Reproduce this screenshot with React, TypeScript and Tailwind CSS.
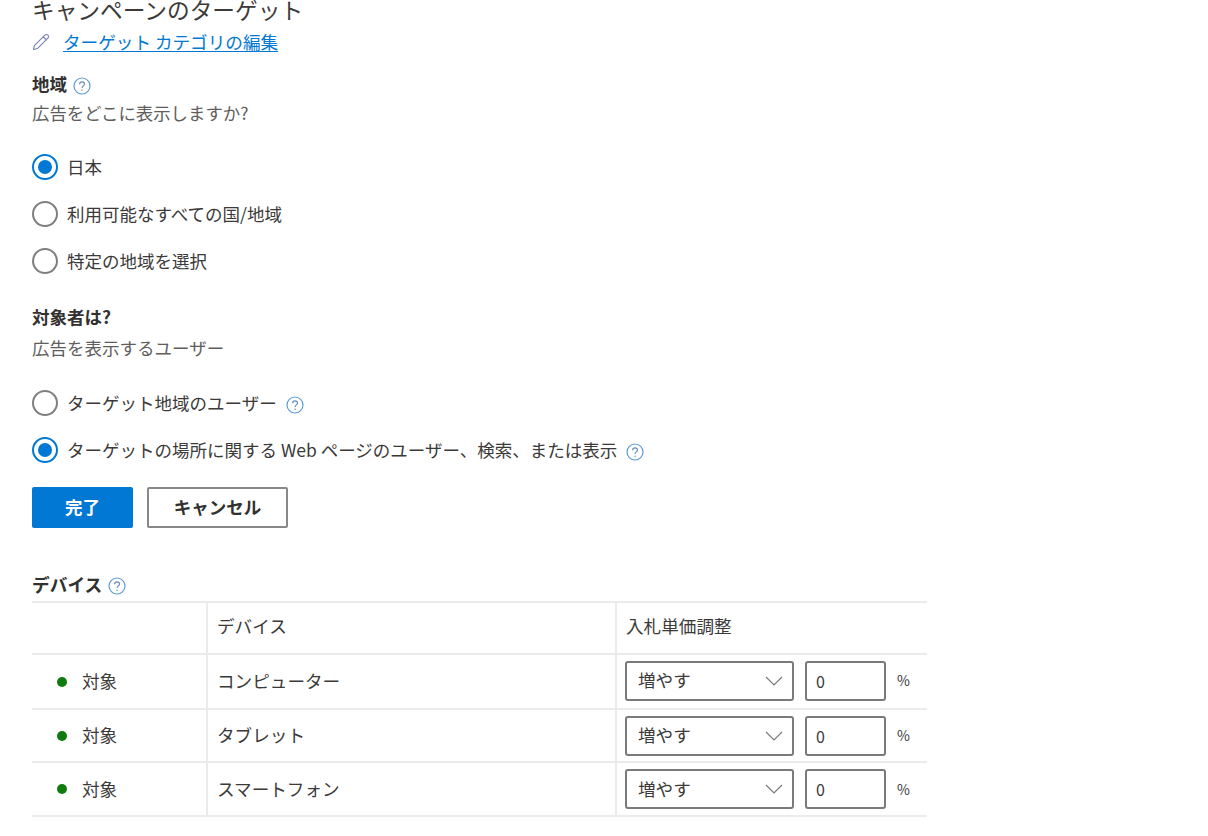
import { Pencil } from "lucide-react";

const font = "font-['Noto_Sans_CJK_JP','Noto_Sans',sans-serif]";

const HelpIcon = ({ className = "" }: { className?: string }) => (
  <svg width="18" height="18" viewBox="0 0 18 18" className={`shrink-0 ${className}`} fill="none">
    <circle cx="9" cy="9" r="8" stroke="#5b9bd5" strokeWidth="1.2" />
    <path d="M6.6 7.2c0-1.5 1.1-2.4 2.5-2.4s2.4.9 2.4 2.2c0 1.8-2.4 2-2.4 4" stroke="#6a8fc0" strokeWidth="1.2" />
    <circle cx="9.1" cy="13.3" r=".8" fill="#6a8fc0" />
  </svg>
);

const Radio = ({ label, checked = false, help = false, className = "" }: { label: string; checked?: boolean; help?: boolean; className?: string }) => (
  <div className={`flex h-7 items-center ${className}`}>
    <span
      className={`flex size-[26px] shrink-0 items-center justify-center rounded-full border-2 bg-white ${
        checked ? "border-[#0078d4]" : "border-[#7f7f7f]"
      }`}
    >
      {checked && <span className="size-[14px] rounded-full bg-[#0078d4]" />}
    </span>
    <span className="ml-[9px] text-[17.5px] leading-7 text-[#3b3a39]">{label}</span>
    {help && <HelpIcon className="ml-[9px] mt-[4px]" />}
  </div>
);

const Chevron = () => (
  <svg width="18" height="10" viewBox="0 0 18 10" fill="none" className="shrink-0">
    <path d="M1 1l8 8 8-8" stroke="#7a7a7a" strokeWidth="1.2" />
  </svg>
);

const rows = [
  { device: "コンピューター", height: "h-[55px]", controls: "pb-[2px]" },
  { device: "タブレット", height: "h-[53px]", controls: "" },
  { device: "スマートフォン", height: "h-[54px]", controls: "" },
];

export default function App() {
  return (
    <div className={`${font} h-[836px] w-[1208px] overflow-hidden bg-white pl-8 text-[#323130]`}>
      <h1 className="h-5 text-[22.7px] font-normal leading-[19px] text-[#3b3a39]">キャンペーンのターゲット</h1>

      <div className="mt-[10px] flex h-6 items-center">
        <Pencil size={18} strokeWidth={1.5} className="text-[#7a80b8]" />
        <a href="#" className="ml-[13px] text-[17.6px] leading-6 text-[#0078d4] underline underline-offset-2">
          ターゲット カテゴリの編集
        </a>
      </div>

      <div className="mt-5 flex h-5 items-center">
        <span className="text-[17.5px] font-bold leading-5">地域</span>
        <HelpIcon className="ml-[6px] mt-[4px]" />
      </div>
      <p className="mt-2 h-[22px] text-[17.4px] leading-[22px] text-[#605e5c]">広告をどこに表示しますか?</p>

      <div className="mt-[29px] flex flex-col gap-[19px]">
        <Radio label="日本" checked />
        <Radio label="利用可能なすべての国/地域" />
        <Radio label="特定の地域を選択" />
      </div>

      <p className="mt-8 h-5 text-[17.5px] font-bold leading-5">対象者は?</p>
      <p className="mt-[10px] h-[22px] text-[17.5px] leading-[22px] text-[#605e5c]">広告を表示するユーザー</p>

      <div className="mt-[30px] flex flex-col gap-[19px]">
        <Radio label="ターゲット地域のユーザー" help />
        <Radio label="ターゲットの場所に関する Web ページのユーザー、検索、または表示" checked help />
      </div>

      <div className="mt-[23px] flex gap-[14px]">
        <button className="h-[41px] w-[101px] rounded-[2px] bg-[#0078d4] text-[17.5px] font-bold text-white">完了</button>
        <button className="h-[41px] w-[141px] rounded-[2px] border-2 border-[#8a8886] bg-white text-[17.5px] font-bold">
          キャンセル
        </button>
      </div>

      <div className="mt-[46px] flex h-5 items-center">
        <span className="text-[17.7px] font-bold leading-5">デバイス</span>
        <HelpIcon className="ml-[6px] mt-[4px]" />
      </div>

      <div className="mt-[7px] w-[895px] border-b-2 border-t-2 border-[#edebe9] text-[17.6px] text-[#3b3a39]">
        <div className="grid h-[50px] grid-cols-[174px_409px_1fr]">
          <div />
          <div className="flex items-center border-l-2 border-[#edebe9] pb-1 pl-[9px]">デバイス</div>
          <div className="flex items-center border-l-2 border-[#edebe9] pb-1 pl-[9px]">入札単価調整</div>
        </div>
        {rows.map((row) => (
          <div key={row.device} className={`grid grid-cols-[174px_409px_1fr] border-t-2 border-[#edebe9] ${row.height}`}>
            <div className="flex items-center pl-[25px]">
              <span className="size-[10px] rounded-full bg-[#107c10]" />
              <span className="ml-[15px]">対象</span>
            </div>
            <div className="flex items-center border-l-2 border-[#edebe9] pl-[9px]">{row.device}</div>
            <div className={`flex items-center border-l-2 border-[#edebe9] pl-2 ${row.controls}`}>
              <div className="flex h-10 w-[169px] items-center justify-between rounded-[3px] border-2 border-[#7a7a7a] pl-[11px] pr-[9px]">
                <span>増やす</span>
                <Chevron />
              </div>
              <div className="ml-[11px] flex h-10 w-[81px] items-center rounded-[3px] border-2 border-[#7a7a7a] pl-[9px] text-[16px]">0</div>
              <span className="ml-[11px] text-[14px]">%</span>
            </div>
          </div>
        ))}
      </div>
    </div>
  );
}
